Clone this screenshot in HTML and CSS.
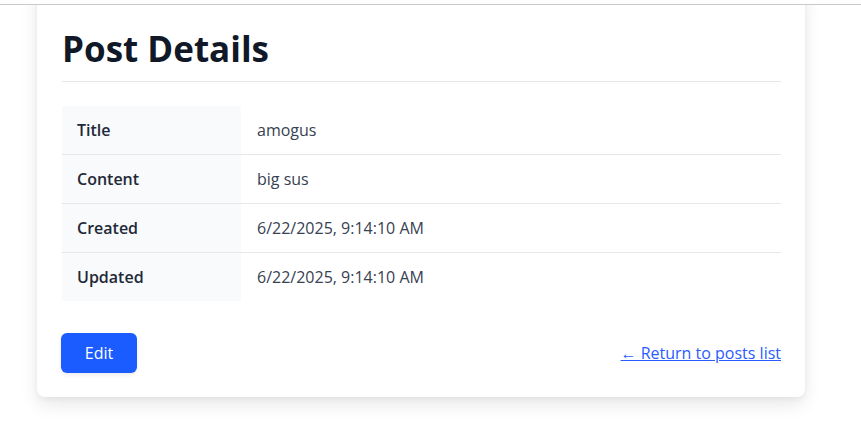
FILE: index.html
```html
<!DOCTYPE html>
<html lang="en">
<head>
<meta charset="utf-8">
<title>Post Details</title>
<link rel="stylesheet" href="styles.css">
</head>
<body>
<div class="topbar"></div>
<main class="page">
  <section class="card">
    <h1 class="title">Post Details</h1>
    <table class="details">
      <tbody>
        <tr><th>Title</th><td>amogus</td></tr>
        <tr><th>Content</th><td>big sus</td></tr>
        <tr><th>Created</th><td>6/22/2025, 9:14:10 AM</td></tr>
        <tr><th>Updated</th><td>6/22/2025, 9:14:10 AM</td></tr>
      </tbody>
    </table>
    <div class="actions">
      <a class="btn" href="#">Edit</a>
      <a class="back" href="#">&larr; Return to posts list</a>
    </div>
  </section>
</main>
</body>
</html>
```
FILE: styles.css
```css
* { box-sizing: border-box; }
html, body { margin: 0; padding: 0; background: #fff; }
body {
  font-family: "Open Sans", "Noto Sans", sans-serif;
  color: #374151;
  overflow: hidden;
  height: 423px;
}
.topbar {
  position: relative;
  z-index: 2;
  height: 5px;
  background: #fff;
  border-bottom: 1px solid #c9c9c9;
}
.page {
  padding-left: 37px;
  margin-top: -20px;
}
.card {
  width: 768px;
  background: #fff;
  border-radius: 8px;
  box-shadow: 0 8px 18px rgba(0,0,0,0.09), 0 2px 6px rgba(0,0,0,0.05);
  padding: 42px 24px 24px 25px;
}
.title {
  margin: 0 0 24px;
  font-size: 35px;
  line-height: 43px;
  font-weight: 700;
  color: #111827;
  padding-bottom: 11px;
  border-bottom: 1px solid #e5e7eb;
}
.details {
  width: 100%;
  border-collapse: collapse;
  font-size: 16px;
  line-height: 24px;
}
.details th, .details td {
  padding: 12px 16px 12px 16px;
  text-align: left;
  vertical-align: middle;
}
.details tr + tr th, .details tr + tr td { border-top: 1px solid #e5e7eb; }
.details th {
  width: 179px;
  background: #f8fafc;
  font-weight: 600;
  color: #1f2937;
  padding-left: 15px;
}
.details td { color: #374151; }
.actions {
  margin-top: 32px;
  display: flex;
  justify-content: space-between;
  align-items: center;
}
.btn {
  display: inline-block;
  width: 76px;
  height: 40px;
  line-height: 40px;
  text-align: center;
  background: #1a5cff;
  color: #fff;
  text-decoration: none;
  border-radius: 6px;
  font-size: 16px;
  margin-left: -1px;
  box-shadow: 0 2px 4px rgba(0,0,0,0.08);
}
.back {
  color: #2a5cff;
  font-size: 16px;
  text-decoration: underline;
}
```
